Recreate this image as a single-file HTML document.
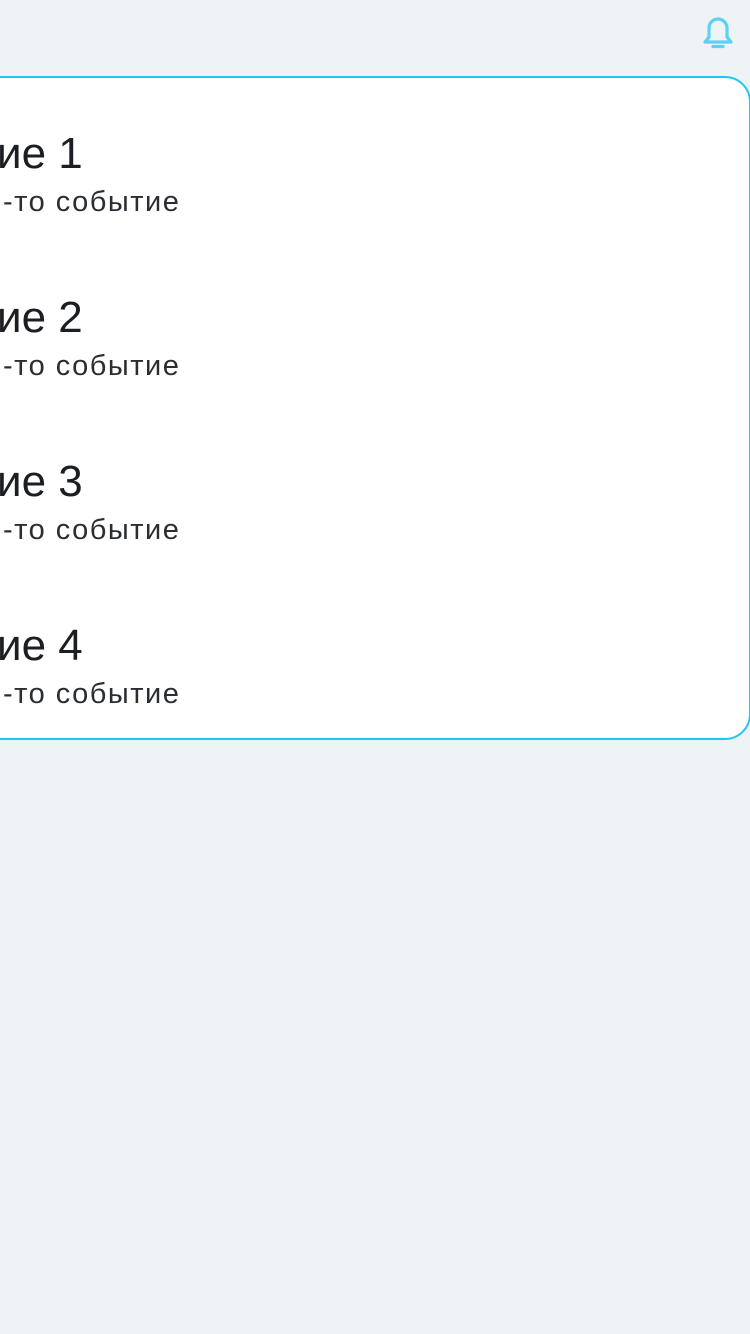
<!DOCTYPE html>
<html><head><meta charset="utf-8"><style>
html,body{margin:0;padding:0;width:750px;height:1334px;background:#eef3f6;overflow:hidden;font-family:"Liberation Sans",sans-serif;color:#1b1f24}
.card{position:absolute;left:-40px;top:76px;width:787px;height:660px;background:#fff;border:2px solid #1ec8f0;border-radius:26px}
.h{position:absolute;left:-3px;font-size:44px;line-height:1;white-space:nowrap}
.s{position:absolute;left:3px;font-size:29px;letter-spacing:1.5px;line-height:1;white-space:nowrap;color:#2a2e33}
</style></head><body>
<svg style="position:absolute;left:700px;top:13px" width="36" height="38" viewBox="0 0 36 38">
<path d="M5 29 L9 24 V15 A9 9 0 0 1 27 15 V24 L31 29 Z" fill="none" stroke="#5cd2f2" stroke-width="3.2" stroke-linejoin="round"/>
<path d="M13 33.5 H23" stroke="#5cd2f2" stroke-width="3.2" stroke-linecap="round"/>
</svg>
<div class="card"></div>
<div class="h" style="top:132px">ие 1</div><div class="s" style="top:188px">-то событие</div>
<div class="h" style="top:296px">ие 2</div><div class="s" style="top:352px">-то событие</div>
<div class="h" style="top:460px">ие 3</div><div class="s" style="top:516px">-то событие</div>
<div class="h" style="top:624px">ие 4</div><div class="s" style="top:680px">-то событие</div>
</body></html>
